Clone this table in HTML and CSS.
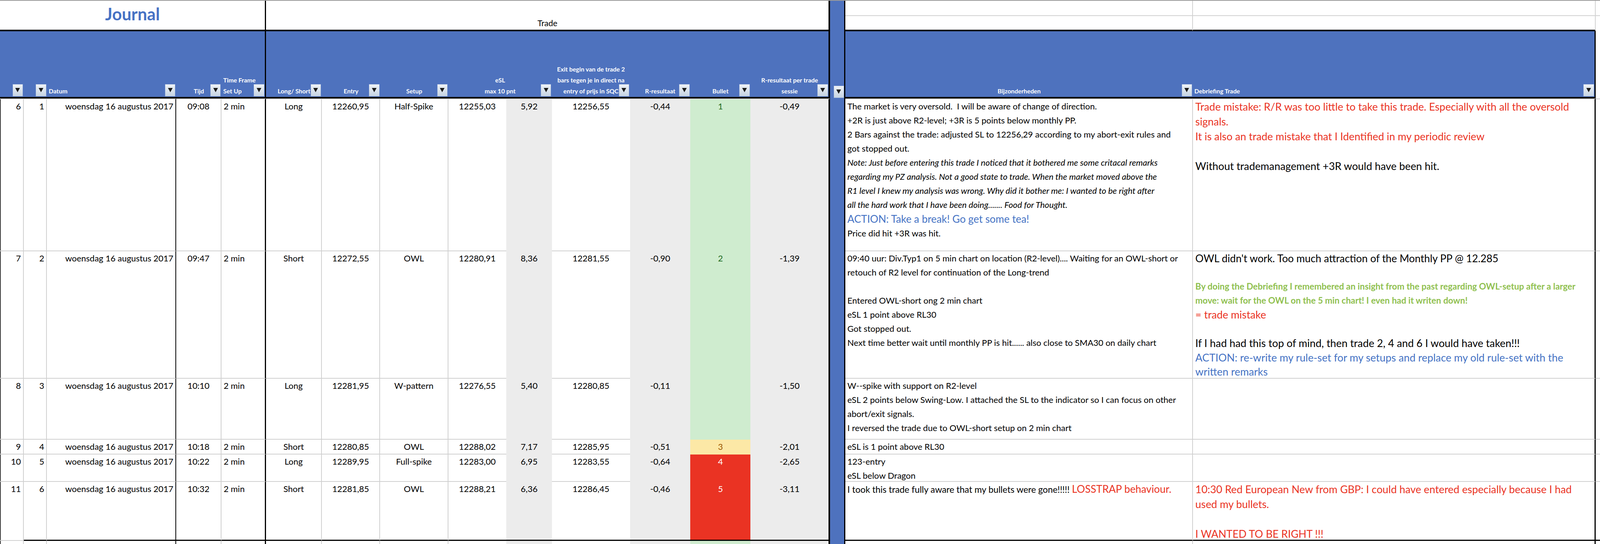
FILE: index.html
```html
<!DOCTYPE html>
<html>
<head>
<meta charset="utf-8">
<title>Journal</title>
<link rel="stylesheet" href="styles.css">
</head>
<body>
<div class="topline"></div>

<div class="grid title">
  <div class="journal">Journal</div>
  <div class="tr-top"></div>
  <div class="tr-bot">Trade</div>
  <div class="tblue"></div>
  <div class="t16a"></div>
  <div class="t17a"></div>
  <div class="t18a"></div>
  <div class="t16b"></div>
  <div class="t17b"></div>
  <div class="t18b"></div>
</div>

<div class="grid head">
  <div class="c"><span class="fb"></span></div>
  <div class="c"><span class="fb"></span></div>
  <div class="l"><span>Datum</span><span class="fb"></span></div>
  <div class="c"><span>Tijd</span><span class="fb"></span></div>
  <div class="l bk3"><span>Time Frame</span><span>Set Up</span><span class="fb"></span></div>
  <div class="c"><span>Long/ Short</span><span class="fb"></span></div>
  <div class="c"><span>Entry</span><span class="fb"></span></div>
  <div class="c"><span>Setup</span><span class="fb"></span></div>
  <div class="c span2"><span>eSL</span><span>max 10 pnt</span><span class="fb"></span></div>
  <div class="c"><span>Exit begin van de trade 2</span><span>bars tegen je in direct na</span><span>entry of prijs in SQC</span><span class="fb"></span></div>
  <div class="c"><span>R-resultaat</span><span class="fb"></span></div>
  <div class="c"><span>Bullet</span><span class="fb"></span></div>
  <div class="c bk4"><span>R-resultaat per trade</span><span>sessie</span><span class="fb"></span></div>
  <div class="hblue"><span class="fb"></span></div>
  <div class="c"><span>Bijzonderheden</span><span class="fb"></span></div>
  <div class="l bk3 deb-h"><span>Debriefing Trade</span><span class="fb"></span></div>
  <div class="hend"></div>
</div>

<div class="grid row r6 first">
  <div class="w br r c1">6</div>
  <div class="w br r">1</div>
  <div class="w bk2 r">woensdag 16 augustus 2017</div>
  <div class="w br c">09:08</div>
  <div class="w bk3">2 min</div>
  <div class="w br c">Long</div>
  <div class="w br c">12260,95</div>
  <div class="w br c">Half-Spike</div>
  <div class="w c">12255,03</div>
  <div class="gr c">5,92</div>
  <div class="w c">12256,55</div>
  <div class="gr c">-0,44</div>
  <div class="gn c">1</div>
  <div class="gr bk4 c">-0,49</div>
  <div class="bl"></div>
  <div class="w br note">
    <div class="ln">The market is very oversold.  I will be aware of change of direction.</div>
    <div class="ln">+2R is just above R2-level; +3R is 5 points below monthly PP.</div>
    <div class="ln">2 Bars against the trade: adjusted SL to 12256,29 according to my abort-exit rules and</div>
    <div class="ln">got stopped out.</div>
    <div class="ln itl">Note: Just before entering this trade I noticed that it bothered me some critacal remarks</div>
    <div class="ln itl">regarding my PZ analysis. Not a good state to trade. When the market moved above the</div>
    <div class="ln itl">R1 level I knew my analysis was wrong. Why did it bother me: I wanted to be right after</div>
    <div class="ln itl">all the hard work that I have been doing....... Food for Thought.</div>
    <div class="ln act act1">ACTION: Take a break! Go get some tea!</div>
    <div class="ln">Price did hit +3R was hit.</div>
  </div>
  <div class="w bk3 note deb">
    <div class="ln big red">Trade mistake: R/R was too little to take this trade. Especially with all the oversold</div>
    <div class="ln big red">signals.</div>
    <div class="ln big red">It is also an trade mistake that I Identified in my periodic review</div>
    <div class="ln big"> </div>
    <div class="ln big">Without trademanagement +3R would have been hit.</div>
  </div>
  <div class="w"></div>
</div>

<div class="grid row r7">
  <div class="w br r c1">7</div>
  <div class="w br r">2</div>
  <div class="w bk2 r">woensdag 16 augustus 2017</div>
  <div class="w br c">09:47</div>
  <div class="w bk3">2 min</div>
  <div class="w br c">Short</div>
  <div class="w br c">12272,55</div>
  <div class="w br c">OWL</div>
  <div class="w c">12280,91</div>
  <div class="gr c">8,36</div>
  <div class="w c">12281,55</div>
  <div class="gr c">-0,90</div>
  <div class="gn c">2</div>
  <div class="gr bk4 c">-1,39</div>
  <div class="bl"></div>
  <div class="w br note">
    <div class="ln">09:40 uur: Div.Typ1 on 5 min chart on location (R2-level).... Waiting for an OWL-short or</div>
    <div class="ln">retouch of R2 level for continuation of the Long-trend</div>
    <div class="ln"> </div>
    <div class="ln">Entered OWL-short ong 2 min chart</div>
    <div class="ln">eSL 1 point above RL30</div>
    <div class="ln">Got stopped out.</div>
    <div class="ln">Next time better wait until monthly PP is hit...... also close to SMA30 on daily chart</div>
  </div>
  <div class="w bk3 note deb">
    <div class="ln mid">OWL didn't work. Too much attraction of the Monthly PP @ 12.285</div>
    <div class="ln"> </div>
    <div class="ln grn">By doing the Debriefing I remembered an insight from the past regarding OWL-setup after a larger</div>
    <div class="ln grn">move: wait for the OWL on the 5 min chart! I even had it writen down!</div>
    <div class="ln big lh37 red">= trade mistake</div>
    <div class="ln"> </div>
    <div class="ln big lh37">If I had had this top of mind, then trade 2, 4 and 6 I would have taken!!!</div>
    <div class="ln big lh37 act">ACTION: re-write my rule-set for my setups and replace my old rule-set with the</div>
    <div class="ln big lh35 act">written remarks</div>
  </div>
  <div class="w"></div>
</div>

<div class="grid row r8">
  <div class="w br r c1">8</div>
  <div class="w br r">3</div>
  <div class="w bk2 r">woensdag 16 augustus 2017</div>
  <div class="w br c">10:10</div>
  <div class="w bk3">2 min</div>
  <div class="w br c">Long</div>
  <div class="w br c">12281,95</div>
  <div class="w br c">W-pattern</div>
  <div class="w c">12276,55</div>
  <div class="gr c">5,40</div>
  <div class="w c">12280,85</div>
  <div class="gr c">-0,11</div>
  <div class="gn c"></div>
  <div class="gr bk4 c">-1,50</div>
  <div class="bl"></div>
  <div class="w br note">
    <div class="ln">W--spike with support on R2-level</div>
    <div class="ln">eSL 2 points below Swing-Low. I attached the SL to the indicator so I can focus on other</div>
    <div class="ln">abort/exit signals.</div>
    <div class="ln">I reversed the trade due to OWL-short setup on 2 min chart</div>
  </div>
  <div class="w bk3 note deb"></div>
  <div class="w"></div>
</div>

<div class="grid row r9">
  <div class="w br r c1">9</div>
  <div class="w br r">4</div>
  <div class="w bk2 r">woensdag 16 augustus 2017</div>
  <div class="w br c">10:18</div>
  <div class="w bk3">2 min</div>
  <div class="w br c">Short</div>
  <div class="w br c">12280,85</div>
  <div class="w br c">OWL</div>
  <div class="w c">12288,02</div>
  <div class="gr c">7,17</div>
  <div class="w c">12285,95</div>
  <div class="gr c">-0,51</div>
  <div class="ye c">3</div>
  <div class="gr bk4 c">-2,01</div>
  <div class="bl"></div>
  <div class="w br note">
    <div class="ln">eSL is 1 point above RL30</div>
  </div>
  <div class="w bk3 note deb"></div>
  <div class="w"></div>
</div>

<div class="grid row r10">
  <div class="w br r c1">10</div>
  <div class="w br r">5</div>
  <div class="w bk2 r">woensdag 16 augustus 2017</div>
  <div class="w br c">10:22</div>
  <div class="w bk3">2 min</div>
  <div class="w br c">Long</div>
  <div class="w br c">12289,95</div>
  <div class="w br c">Full-spike</div>
  <div class="w c">12283,00</div>
  <div class="gr c">6,95</div>
  <div class="w c">12283,55</div>
  <div class="gr c">-0,64</div>
  <div class="rd c">4</div>
  <div class="gr bk4 c">-2,65</div>
  <div class="bl"></div>
  <div class="w br note">
    <div class="ln">123-entry</div>
    <div class="ln">eSL below Dragon</div>
  </div>
  <div class="w bk3 note deb"></div>
  <div class="w"></div>
</div>

<div class="grid row r11 last">
  <div class="w br r c1">11</div>
  <div class="w br r">6</div>
  <div class="w bk2 r">woensdag 16 augustus 2017</div>
  <div class="w br c">10:32</div>
  <div class="w bk3">2 min</div>
  <div class="w br c">Short</div>
  <div class="w br c">12281,85</div>
  <div class="w br c">OWL</div>
  <div class="w c">12288,21</div>
  <div class="gr c">6,36</div>
  <div class="w c">12286,45</div>
  <div class="gr c">-0,46</div>
  <div class="rd c">5</div>
  <div class="gr bk4 c">-3,11</div>
  <div class="bl"></div>
  <div class="w br note">
    <div class="ln wide">I took this trade fully aware that my bullets were gone!!!!! <span class="red big-in">LOSSTRAP behaviour.</span></div>
  </div>
  <div class="w bk3 note deb">
    <div class="ln big red">10:30 Red European New from GBP: I could have entered especially because I had</div>
    <div class="ln big red">used my bullets.</div>
    <div class="ln big"> </div>
    <div class="ln big red">I WANTED TO BE RIGHT !!!</div>
  </div>
  <div class="w"></div>
</div>

<div class="grid row filler">
  <div class="br c1"></div>
  <div class="br"></div>
  <div class="bk2"></div>
  <div class="br"></div>
  <div class="bk3"></div>
  <div class="br"></div>
  <div class="br"></div>
  <div class="br"></div>
  <div></div>
  <div class="gr"></div>
  <div></div>
  <div class="gr"></div>
  <div class="gn"></div>
  <div class="gr bk4"></div>
  <div class="bl"></div>
  <div class="br"></div>
  <div class="bk3"></div>
  <div></div>
</div>
</body>
</html>
```

FILE: styles.css
```css
/* Horizontal sizes follow the window width (design width 4658 units);
   vertical sizes are fixed pixels. */
:root {
  --u: calc(100vw / 4658);
}

html, body {
  margin: 0;
  padding: 0;
  background: #ffffff;
}

body {
  width: 100%;
  height: 1392px;
  overflow: hidden;
  font-family: Lato, "Liberation Sans", sans-serif;
  color: #000000;
}

.topline {
  height: 2px;
  background: #9b9b9b;
}

.grid {
  display: grid;
  grid-template-columns: 69fr 68fr 376fr 132fr 130fr 162fr 170fr 198fr 169fr 133fr 227fr 176fr 175fr 232fr 44fr 1012fr 1173fr 12fr;
}

.grid > div {
  box-sizing: border-box;
  position: relative;
  overflow: hidden;
  min-width: 0;
}

/* ---------- title band ---------- */
.title {
  grid-template-rows: 39px 39px;
}

.journal {
  grid-column: 1 / 6;
  grid-row: 1 / 3;
  border-right: 3px solid #000;
  border-bottom: 4px solid #000;
  display: flex;
  align-items: center;
  justify-content: center;
  padding-bottom: 8px;
  font-weight: 700;
  font-size: calc(49 * var(--u));
  color: #4672c4;
}

.tr-top {
  grid-column: 6 / 15;
  grid-row: 1;
  border-right: 4px solid #000;
}

.tr-bot {
  grid-column: 6 / 15;
  grid-row: 2;
  border-right: 4px solid #000;
  border-bottom: 4px solid #000;
  display: flex;
  align-items: center;
  justify-content: center;
  font-size: calc(24 * var(--u));
}

.tblue {
  grid-column: 15;
  grid-row: 1 / 3;
  background: #4e72be;
  border-right: 3px solid #000;
}

.t16a { grid-column: 16; grid-row: 1; border-bottom: 2px solid #d2d2d2; border-right: 2px solid #d2d2d2; }
.t17a { grid-column: 17; grid-row: 1; border-bottom: 2px solid #d2d2d2; border-right: 2px solid #d2d2d2; }
.t18a { grid-column: 18; grid-row: 1; border-bottom: 2px solid #d2d2d2; }
.t16b { grid-column: 16; grid-row: 2; border-bottom: 4px solid #000; border-right: 2px solid #d2d2d2; }
.t17b { grid-column: 17; grid-row: 2; border-bottom: 4px solid #000; border-right: 2px solid #d2d2d2; }
.t18b { grid-column: 18; grid-row: 2; }

/* ---------- header band ---------- */
.head {
  height: 172px;
}

.head > div {
  background: #4e72be;
  border-bottom: 4px solid #000;
  color: #ffffff;
  font-weight: 700;
  font-size: calc(18 * var(--u));
  line-height: 28px;
  display: flex;
  flex-direction: column;
  justify-content: flex-end;
  padding-bottom: 1px;
  white-space: nowrap;
}

.head > .c {
  align-items: center;
  text-align: center;
}

.head > .l {
  align-items: flex-start;
  padding-left: calc(5 * var(--u));
}

.head > .deb-h {
  padding-left: calc(4 * var(--u));
}

.head > .span2 {
  grid-column: span 2;
}

.head > .hblue {
  border-bottom: none;
  border-right: 3px solid #000;
}

.head > .hend {
  background: #ffffff;
  border-bottom: none;
}

.fb {
  position: absolute;
  right: calc(2 * var(--u));
  bottom: 1px;
  width: calc(31 * var(--u));
  height: 32px;
  box-sizing: border-box;
  border: 1px solid #6d8ccb;
  background: linear-gradient(#eef2f6, #c6d4e3);
}

.fb::after {
  content: "";
  position: absolute;
  left: 50%;
  top: 50%;
  margin-left: calc(-7 * var(--u));
  margin-top: -6px;
  border-left: calc(7 * var(--u)) solid transparent;
  border-right: calc(7 * var(--u)) solid transparent;
  border-top: 11px solid #1a1a1a;
}

.head > .hblue .fb {
  right: 0;
}

/* ---------- data rows ---------- */
.row > div {
  font-size: calc(25 * var(--u));
  line-height: 36px;
  white-space: nowrap;
  padding: 0 calc(6 * var(--u));
}

.r6 { height: 391px; }
.r7 { height: 326px; }
.r8 { height: 156px; }
.r9 { height: 38px; }
.r10 { height: 70px; }
.r11 { height: 151px; }
.filler { height: 8px; }

.first > div {
  border-top: 2px solid #d0d0d0;
}

.w { border-bottom: 2px solid #d0d0d0; }
.br { border-right: 2px solid #d0d0d0; }
.bk2 { border-right: 2px solid #000; }
.bk3 { border-right: 3px solid #000; }
.bk4 { border-right: 4px solid #000; }

.row > .r { text-align: right; }
.row > .c { text-align: center; }

.row > .c1 {
  box-shadow: inset 2px 0 0 #3a3a3a;
}

.gr { background: #ececec; }
.gn { background: #cfeccf; color: #1f6b1f; }
.ye { background: #fce8a6; color: #9c5700; }
.rd { background: #ea3323; color: #ffffff; }

.row > .bl {
  background: #4e72be;
  border-right: 3px solid #000;
  border-top: none;
  border-bottom: none;
  padding: 0;
}

.last > div {
  border-bottom: 3px solid #000;
}

.last > .c1 {
  border-bottom: 2px solid #d0d0d0;
}

.last > .bl {
  border-bottom: none;
}

/* ---------- notes ---------- */
.row > .deb {
  padding-left: calc(7 * var(--u));
}

.ln {
  white-space: pre;
}

.itl { font-style: italic; }

.wide {
  font-size: calc(26 * var(--u));
}

.mid {
  font-size: calc(30 * var(--u));
}

.big {
  font-size: calc(30.5 * var(--u));
  line-height: 38px;
}

.lh37 { line-height: 37px; }
.lh35 { line-height: 35px; }

.big-in {
  font-size: calc(30 * var(--u));
}

.act1 {
  font-size: calc(30 * var(--u));
  line-height: 37px;
}

.red { color: #ea3323; }
.act { color: #4472c4; }

.grn {
  color: #8fc04f;
  font-weight: 700;
  font-size: calc(25.5 * var(--u));
}
```
